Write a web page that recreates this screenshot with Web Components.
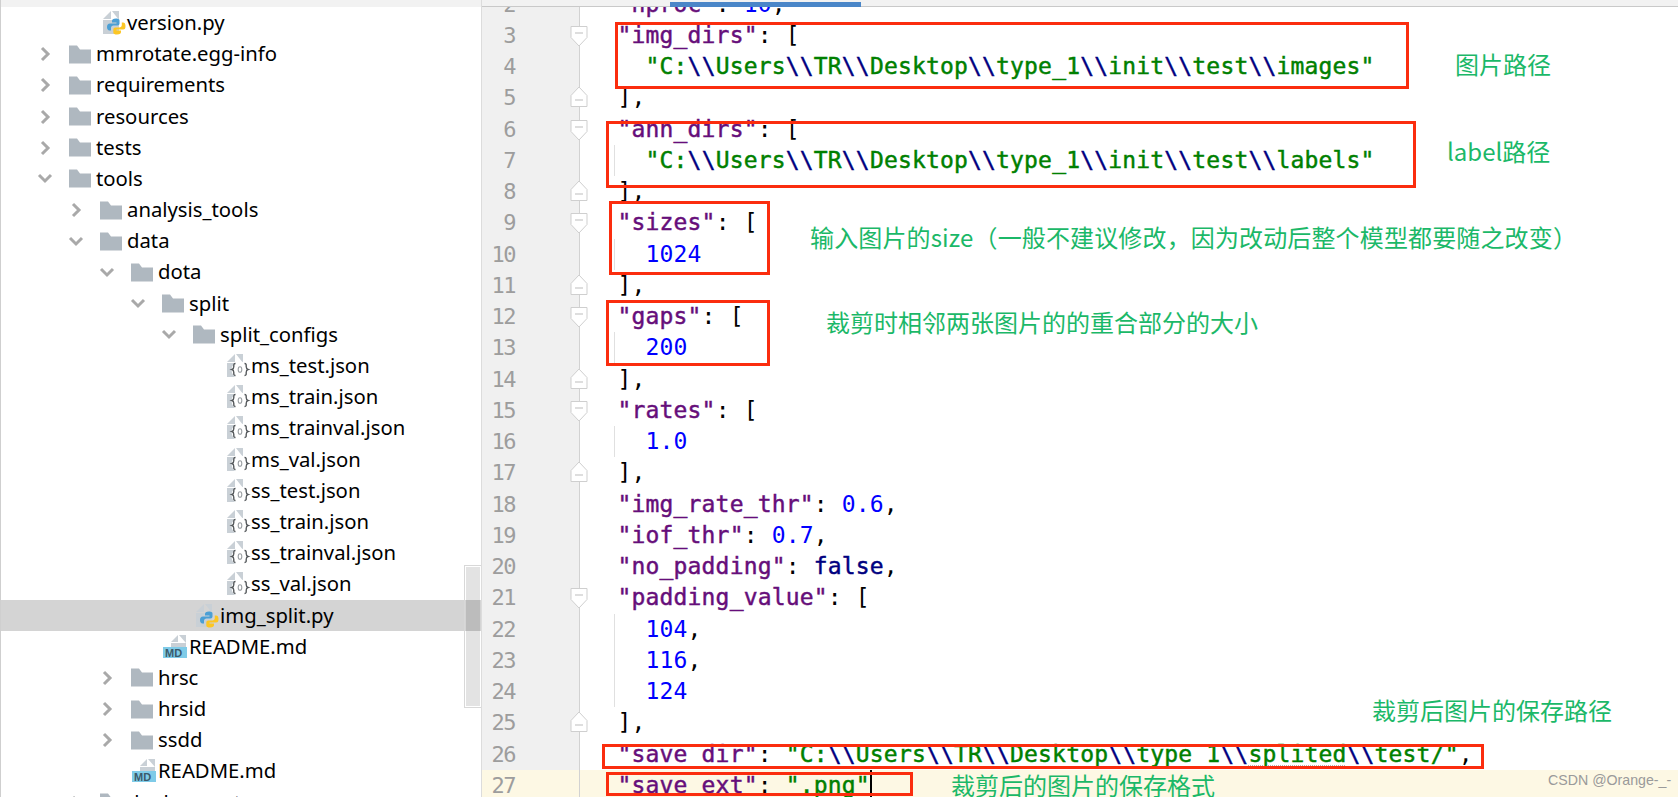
<!DOCTYPE html>
<html lang="zh">
<head>
<meta charset="utf-8">
<title>img_split</title>
<style>
    html, body { margin: 0; padding: 0; background: #fff; overflow: hidden; }
</style>
</head>
<body>
<app-shell></app-shell>
<script>
const CHEVRON_RIGHT = `<svg width="11" height="16" viewBox="0 0 11 16"><path d="M2 2l6 6-6 6" fill="none" stroke="#a9a9a9" stroke-width="3"/></svg>`;
const CHEVRON_DOWN = `<svg width="16" height="11" viewBox="0 0 16 11"><path d="M2 2l6 6 6-6" fill="none" stroke="#a9a9a9" stroke-width="3"/></svg>`;
const FOLDER = `<svg width="22" height="19" viewBox="0 0 22 19"><path d="M0 0.5H8L11 4.5H22V18.5H0Z" fill="#afb8c0"/></svg>`;
const DOC = `<path d="M0 8L8 0V8Z" fill="#c9d0d6"/><path d="M9 0H16V9H0V23H16V9" fill="#c9d0d6"/>`;
const PY = `<svg width="22" height="24" viewBox="0 0 22 24">${DOC}
    <path d="M13 7.500c-3 0-4 1-4 2.500v1.500h4.500v1H7c-2 0-3 1.500-3 3.500s1 3.500 2.500 3.500h1.500v-2.500c0-1.500 1-2.500 2.500-2.500h4c1.200 0 2-.8 2-2v-3c0-1.500-1.500-2-4.500-2z" fill="#4b9fd5"/>
    <path d="M14 23.500c3 0 4-1 4-2.500v-1.500h-4.500v-1H20c2 0 2.500-1 2.500-3.500s-1-3.500-2.500-3.500h-1.200v2.500c0 1.500-1 2.500-2.500 2.500h-4c-1.200 0-2 .8-2 2v3c0 1.500 1.500 2 3.700 2z" fill="#fcc624"/>
</svg>`;
const JSON_ICON = `<svg width="22" height="24" viewBox="0 0 22 24">${DOC}
    <circle cx="13" cy="16" r="8.500" fill="#fff"/>
    <path d="M8.500 9.500c-2 0-1.700 1.500-1.700 3s0 2.500-1.800 3c1.800.5 1.800 1.500 1.800 3s-.3 3 1.700 3M17.500 9.500c2 0 1.700 1.500 1.700 3s0 2.500 1.800 3c-1.800.5-1.800 1.500-1.800 3s.3 3-1.700 3" fill="none" stroke="#55595c" stroke-width="1.400"/>
    <ellipse cx="13" cy="15.500" rx="1.800" ry="2.800" fill="none" stroke="#9a9fa3" stroke-width="1.100"/>
</svg>`;
const MD = `<svg width="24" height="24" viewBox="0 0 24 24">
    <path d="M8 7L15 0V7Z" fill="#c9d0d6"/><path d="M16 0H23V12H8V8H23" fill="#c9d0d6"/>
    <rect x="0" y="12" width="24" height="11" fill="#7fcbe8"/>
    <text x="2" y="22" font-family="'Liberation Sans', sans-serif" font-weight="700" font-size="11" fill="#3b5a6b">MD</text>
</svg>`;
const ICONS = { folder: FOLDER, py: PY, json: JSON_ICON, md: MD };

class TreeRow extends HTMLElement {
    constructor() {
        super();
        this.attachShadow({ mode: 'open' });
    }

    connectedCallback() {
        const level = Number(this.getAttribute('level') || 0);
        const kind = this.getAttribute('kind') || 'folder';
        const open = this.getAttribute('open');
        const selected = this.hasAttribute('selected');
        let chevron = '';
        if (open === 'yes') chevron = CHEVRON_DOWN;
        if (open === 'no') chevron = CHEVRON_RIGHT;
        this.shadowRoot.innerHTML = `
            <style>
                :host {
                    display: flex;
                    align-items: center;
                    height: 31.2px;
                    padding-left: ${36 + level * 31}px;
                    background: ${selected ? '#d4d4d4' : 'transparent'};
                    font: 20.300px "Noto Sans", "Open Sans", sans-serif;
                    color: #000;
                    white-space: nowrap;
                }
                .chev {
                    flex: 0 0 32px;
                    height: 16px;
                    display: flex;
                    align-items: center;
                    padding-left: ${open === 'yes' ? 0 : 3}px;
                    box-sizing: border-box;
                }
                .icon {
                    flex: 0 0 27px;
                    height: 24px;
                    display: flex;
                    align-items: center;
                    padding-left: ${kind === 'py' || kind === 'json' ? 3 : kind === 'md' ? 1 : 0}px;
                    box-sizing: border-box;
                }
                .label { margin-bottom: 2px; }
                svg { display: block; overflow: visible; }
            </style>
            <span class="chev">${chevron}</span>
            <span class="icon">${ICONS[kind]}</span>
            <span class="label"><slot></slot></span>
        `;
    }
}
customElements.define('tree-row', TreeRow);

class ProjectTree extends HTMLElement {
    constructor() {
        super();
        this.attachShadow({ mode: 'open' });
    }

    connectedCallback() {
        const rows = [
            [1, 'py', '', 'version.py'],
            [0, 'folder', 'no', 'mmrotate.egg-info'],
            [0, 'folder', 'no', 'requirements'],
            [0, 'folder', 'no', 'resources'],
            [0, 'folder', 'no', 'tests'],
            [0, 'folder', 'yes', 'tools'],
            [1, 'folder', 'no', 'analysis_tools'],
            [1, 'folder', 'yes', 'data'],
            [2, 'folder', 'yes', 'dota'],
            [3, 'folder', 'yes', 'split'],
            [4, 'folder', 'yes', 'split_configs'],
            [5, 'json', '', 'ms_test.json'],
            [5, 'json', '', 'ms_train.json'],
            [5, 'json', '', 'ms_trainval.json'],
            [5, 'json', '', 'ms_val.json'],
            [5, 'json', '', 'ss_test.json'],
            [5, 'json', '', 'ss_train.json'],
            [5, 'json', '', 'ss_trainval.json'],
            [5, 'json', '', 'ss_val.json'],
            [4, 'py', '', 'img_split.py', true],
            [3, 'md', '', 'README.md'],
            [2, 'folder', 'no', 'hrsc'],
            [2, 'folder', 'no', 'hrsid'],
            [2, 'folder', 'no', 'ssdd'],
            [2, 'md', '', 'README.md'],
            [1, 'folder', 'no', 'deployment']
        ];
        this.shadowRoot.innerHTML = `
            <style>
                :host {
                    display: block;
                    flex: 0 0 481px;
                    height: 797px;
                    position: relative;
                    box-sizing: border-box;
                    border-left: 1px solid #cfcfcf;
                    overflow: hidden;
                }
                .top { height: 7.4px; background: #f2f2f2; margin-left: -1px; }
                .scroll {
                    position: absolute;
                    left: 463px;
                    top: 565px;
                    width: 18px;
                    height: 143px;
                    box-sizing: border-box;
                    border: 1px solid #d8d8d8;
                    background: rgba(0, 0, 0, 0.11);
                    background-clip: content-box;
                    padding: 1px;
                }
            </style>
            <div class="top"></div>
            ${rows.map(r => `<tree-row level="${r[0]}" kind="${r[1]}" ${r[2] ? `open="${r[2]}"` : ''} ${r[4] ? 'selected' : ''}>${r[3]}</tree-row>`).join('')}
            <div class="scroll"></div>
        `;
    }
}
customElements.define('project-tree', ProjectTree);

function highlight(code) {
    const esc = s => s.replace(/&/g, '&amp;').replace(/</g, '&lt;');
    return code.replace(/"[^"]*"(:)?|\bfalse\b|\d+(\.\d+)?|[^"\d]+?/g, (m, colon) => {
        if (m === 'false') return `<b class="kw">false</b>`;
        if (/^\d/.test(m)) return `<span class="num">${m}</span>`;
        if (colon) return `<b class="key">${esc(m.slice(0, -1))}</b>:`;
        if (m[0] === '"') {
            const inner = esc(m).replace(/\\\\/g, '<span class="esc">\\\\</span>').replace('splited', '<span class="typo">splited</span>');
            return `<b class="str">${inner}</b>`;
        }
        return esc(m);
    });
}

class CodeLine extends HTMLElement {
    constructor() {
        super();
        this.attachShadow({ mode: 'open' });
    }

    connectedCallback() {
        const fold = this.getAttribute('fold');
        const current = this.hasAttribute('current');
        const guide = this.hasAttribute('guide');
        let foldIcon = '';
        if (fold === 'open') foldIcon = `<svg class="fold open" width="18" height="21" viewBox="0 0 18 21"><path d="M1 .5H17V11.500L9 20 1 11.500Z" fill="#fff" stroke="#cfcfcf"/><path d="M5 7H13" stroke="#bdbdbd"/></svg>`;
        if (fold === 'close') foldIcon = `<svg class="fold close" width="18" height="21" viewBox="0 0 18 21"><path d="M1 20.500H17V9.500L9 1 1 9.500Z" fill="#fff" stroke="#cfcfcf"/><path d="M5 14H13" stroke="#bdbdbd"/></svg>`;
        this.shadowRoot.innerHTML = `
            <style>
                :host {
                    display: flex;
                    height: 31.25px;
                    background: ${current ? '#fdf8e4' : 'transparent'};
                    font: 23px "DejaVu Sans Mono", monospace;
                    line-height: 31.25px;
                    white-space: pre;
                    position: relative;
                }
                .no {
                    flex: 0 0 98px;
                    box-sizing: border-box;
                    padding-right: 64px;
                    text-align: right;
                    font-size: 22px;
                    letter-spacing: -1.5px;
                    color: #9d9d9d;
                    background: ${current ? 'transparent' : '#f0f0f0'};
                    border-right: 1px solid #d2d2d2;
                    position: relative;
                }
                .fold { position: absolute; left: 88px; }
                .fold.open { top: 6px; }
                .fold.close { top: 4px; }
                .code {
                    flex: 1;
                    padding-left: 37.5px;
                    letter-spacing: 0.17px;
                    color: #000;
                    position: relative;
                }
                .guide {
                    position: absolute;
                    left: 34px;
                    top: 0;
                    bottom: 0;
                    border-left: 1px solid #e0e0e0;
                }
                b { font-weight: 400; -webkit-text-stroke: 0.45px currentColor; }
                .key { color: #660e7a; }
                .str { color: #008000; }
                .esc { color: #000080; }
                .num { color: #0000ff; }
                .kw { color: #000080; }
                .typo { text-decoration: underline dotted #b5b5b5 1px; text-underline-offset: 3px; }
                .caret {
                    display: inline-block;
                    width: 2px;
                    height: 31.25px;
                    background: #000;
                    vertical-align: top;
                }
            </style>
            <div class="no">${this.getAttribute('no')}${foldIcon}</div>
            <div class="code">${guide ? '<span class="guide"></span>' : ''}${highlight(this.getAttribute('code') || '')}${current ? '<span class="caret"></span>' : ''}</div>
        `;
    }
}
customElements.define('code-line', CodeLine);

class CodeEditor extends HTMLElement {
    constructor() {
        super();
        this.attachShadow({ mode: 'open' });
    }

    connectedCallback() {
        const p = String.raw;
        const lines = [
            [2, p`"nproc": 10,`],
            [3, p`"img_dirs": [`, 'open'],
            [4, p`  "C:\\Users\\TR\\Desktop\\type_1\\init\\test\\images"`],
            [5, p`],`, 'close'],
            [6, p`"ann_dirs": [`, 'open'],
            [7, p`  "C:\\Users\\TR\\Desktop\\type_1\\init\\test\\labels"`, '', true],
            [8, p`],`, 'close'],
            [9, p`"sizes": [`, 'open'],
            [10, p`  1024`, '', true],
            [11, p`],`, 'close'],
            [12, p`"gaps": [`, 'open'],
            [13, p`  200`, '', true],
            [14, p`],`, 'close'],
            [15, p`"rates": [`, 'open'],
            [16, p`  1.0`, '', true],
            [17, p`],`, 'close'],
            [18, p`"img_rate_thr": 0.6,`],
            [19, p`"iof_thr": 0.7,`],
            [20, p`"no_padding": false,`],
            [21, p`"padding_value": [`, 'open'],
            [22, p`  104,`, '', true],
            [23, p`  116,`, '', true],
            [24, p`  124`, '', true],
            [25, p`],`, 'close'],
            [26, p`"save_dir": "C:\\Users\\TR\\Desktop\\type_1\\splited\\test/",`]
        ];
        const attr = s => s.replace(/&/g, '&amp;').replace(/"/g, '&quot;');
        this.shadowRoot.innerHTML = `
            <style>
                :host {
                    display: block;
                    flex: 1;
                    height: 797px;
                    overflow: hidden;
                    position: relative;
                    box-sizing: border-box;
                    border-left: 1px solid #dcdcdc;
                }
                .top {
                    position: relative;
                    z-index: 2;
                    height: 7px;
                    box-sizing: border-box;
                    background: #f2f2f2;
                    border-bottom: 1px solid #c9c9c9;
                }
                .top i {
                    position: absolute;
                    left: 188px;
                    top: 2px;
                    width: 191px;
                    height: 5px;
                    background: #4a86c8;
                }
                .lines { margin-top: -18.4px; }
            </style>
            <div class="top"><i></i></div>
            <div class="lines">
                ${lines.map(l => `<code-line no="${l[0]}" code="${attr(l[1])}" ${l[2] ? `fold="${l[2]}"` : ''} ${l[3] ? 'guide' : ''}></code-line>`).join('')}
                <code-line no="27" code="${attr('"save_ext": ".png"')}" current></code-line>
            </div>
        `;
    }
}
customElements.define('code-editor', CodeEditor);

class RedBox extends HTMLElement {
    constructor() {
        super();
        this.attachShadow({ mode: 'open' });
    }

    connectedCallback() {
        const [x, y, w, h] = this.getAttribute('rect').split(',');
        this.shadowRoot.innerHTML = `
            <style>
                :host {
                    display: block;
                    position: absolute;
                    left: ${x}px;
                    top: ${y}px;
                    width: ${w}px;
                    height: ${h}px;
                    box-sizing: border-box;
                    border: 3px solid #fb2d0e;
                }
            </style>
        `;
    }
}
customElements.define('red-box', RedBox);

class NoteLabel extends HTMLElement {
    constructor() {
        super();
        this.attachShadow({ mode: 'open' });
    }

    connectedCallback() {
        this.shadowRoot.innerHTML = `
            <style>
                :host {
                    display: block;
                    position: absolute;
                    left: ${this.getAttribute('x')}px;
                    top: ${Number(this.getAttribute('cy')) - 17}px;
                    height: 34px;
                    white-space: nowrap;
                    font: 24px/34px "Noto Sans CJK SC", "Noto Sans", sans-serif;
                    letter-spacing: ${this.getAttribute('spacing') || 0}px;
                    color: #1bb868;
                }
            </style>
            <slot></slot>
        `;
    }
}
customElements.define('note-label', NoteLabel);

class WaterMark extends HTMLElement {
    constructor() {
        super();
        this.attachShadow({ mode: 'open' });
    }

    connectedCallback() {
        this.shadowRoot.innerHTML = `
            <style>
                :host {
                    display: block;
                    position: absolute;
                    left: 1548px;
                    top: 770px;
                    white-space: nowrap;
                    font: 14.200px/20px "Liberation Sans", sans-serif;
                    color: #9a9a9a;
                }
            </style>
            <slot></slot>
        `;
    }
}
customElements.define('water-mark', WaterMark);

class AppShell extends HTMLElement {
    constructor() {
        super();
        this.attachShadow({ mode: 'open' });
    }

    connectedCallback() {
        this.shadowRoot.innerHTML = `
            <style>
                :host {
                    display: flex;
                    position: relative;
                    width: 1678px;
                    height: 797px;
                    overflow: hidden;
                    background: #fff;
                }
            </style>
            <project-tree></project-tree>
            <code-editor></code-editor>
            <red-box rect="615,22,794,67"></red-box>
            <red-box rect="606,121,810,67"></red-box>
            <red-box rect="609,201,161,74"></red-box>
            <red-box rect="606,300,164,66"></red-box>
            <red-box rect="602,744,882,25"></red-box>
            <red-box rect="606,772,307,24"></red-box>
            <note-label x="1455" cy="64">图片路径</note-label>
            <note-label x="1447" cy="151">label路径</note-label>
            <note-label x="810" cy="237" spacing="0.14">输入图片的size（一般不建议修改，因为改动后整个模型都要随之改变）</note-label>
            <note-label x="826" cy="322">裁剪时相邻两张图片的的重合部分的大小</note-label>
            <note-label x="1372" cy="710">裁剪后图片的保存路径</note-label>
            <note-label x="951" cy="785">裁剪后的图片的保存格式</note-label>
            <water-mark>CSDN @Orange-_-</water-mark>
        `;
    }
}
customElements.define('app-shell', AppShell);
</script>
</body>
</html>
